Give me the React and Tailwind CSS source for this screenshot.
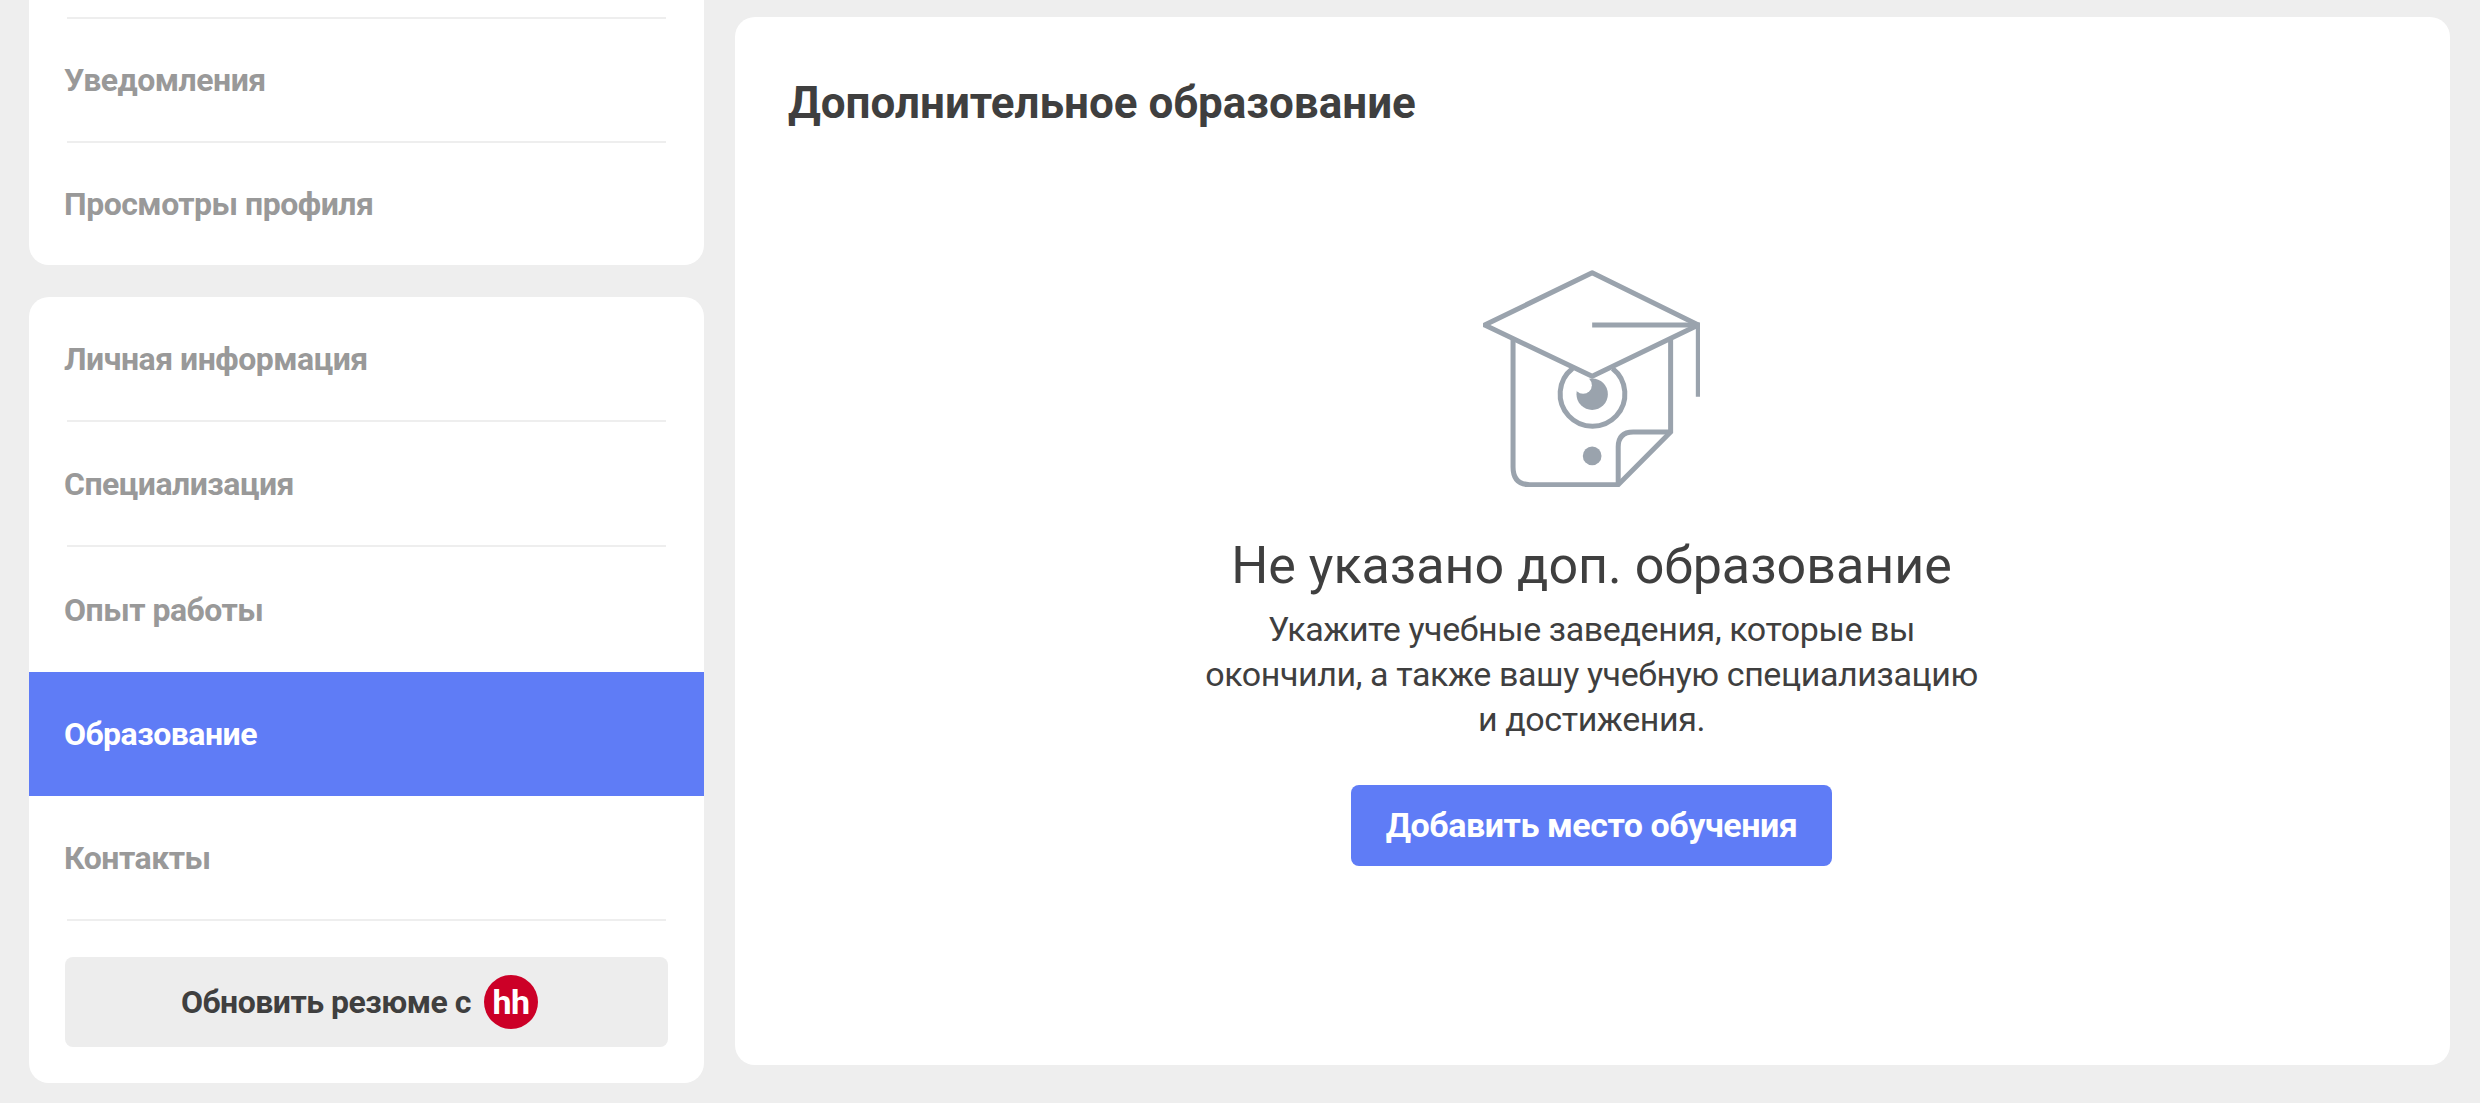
const font = { fontFamily: 'Roboto, "Noto Sans", sans-serif' };

function Row({ children, active, className = "h-[123px]" }) {
  return (
    <div className={`flex items-center pl-[35px] text-[32px] font-bold tracking-[-0.5px] ${className} ${active ? "bg-[#5f7cf6] text-white" : "text-[#999999]"}`}>
      {children}
    </div>
  );
}

function Divider() {
  return <div className="mx-[38px] h-[2px] bg-[#eeeeee]" />;
}

function CapIcon() {
  return (
    <svg viewBox="130 60 650 650" className="h-[217px] w-[217px]" fill="none" stroke="#9aa3ad" strokeWidth="15">
      <path d="M220 268V650Q220 703 270 703H535L692 545V268" />
      <path d="M535 703V590Q535 545 580 545H692" />
      <path d="M398 355A97 97 0 1 0 518 355" />
      <circle cx="457" cy="432" r="47" fill="#9aa3ad" stroke="none" />
      <circle cx="430" cy="405" r="26" fill="#ffffff" stroke="none" />
      <circle cx="457" cy="617" r="28" fill="#9aa3ad" stroke="none" />
      <path d="M457 68L135 225L457 378L775 225Z" strokeLinejoin="round" />
      <path d="M457 225H775V440" />
    </svg>
  );
}

export default function App() {
  return (
    <div style={font} className="flex h-[1103px] gap-[31px] overflow-hidden bg-[#eeeeee] pl-[29px]">
      <aside className="flex w-[675px] flex-col gap-[32px]">
        <div className="rounded-b-[20px] bg-white pt-[17px]">
          <Divider />
          <Row className="h-[122px]">Уведомления</Row>
          <Divider />
          <Row className="h-[122px]">Просмотры профиля</Row>
        </div>
        <div className="rounded-[20px] bg-white">
          <Row>Личная информация</Row>
          <Divider />
          <Row>Специализация</Row>
          <Divider />
          <Row className="h-[125px]">Опыт работы</Row>
          <Row active className="h-[124px]">Образование</Row>
          <Row>Контакты</Row>
          <Divider />
          <div className="px-9 pb-9 pt-[36px]">
            <button className="flex h-[90px] w-[603px] items-center justify-center gap-[13px] rounded-lg bg-[#ededed] pr-[14px] text-[32px] font-bold tracking-[-0.5px] text-[#3f3f3f]">
              Обновить резюме с
              <span className="flex h-[54px] w-[54px] items-center justify-center rounded-full bg-[#cc0027] text-[34px] font-bold leading-none tracking-[-0.5px] text-white">hh</span>
            </button>
          </div>
        </div>
      </aside>
      <main className="mt-[17px] flex h-[1048px] w-[1715px] flex-col rounded-[20px] bg-white pl-[53px] pr-[55px]">
        <h1 className="pt-[56px] text-[44px] font-bold leading-[60px] tracking-normal text-[#3f3f3f]">Дополнительное образование</h1>
        <div className="flex flex-col items-center pt-[137px]">
          <CapIcon />
          <h2 className="mt-[48px] text-[52px] font-normal leading-[62px] tracking-normal text-[#3f3f3f]">Не указано доп. образование</h2>
          <p className="mt-[10px] text-center text-[34px] leading-[45px] tracking-[-0.4px] text-[#3f3f3f]">
            Укажите учебные заведения, которые вы<br />
            окончили, а также вашу учебную специализацию<br />
            и достижения.
          </p>
          <button className="mt-[43px] h-[81px] w-[481px] rounded-lg bg-[#5f7cf6] text-[34px] font-bold tracking-[-0.45px] text-white">
            Добавить место обучения
          </button>
        </div>
      </main>
    </div>
  );
}
